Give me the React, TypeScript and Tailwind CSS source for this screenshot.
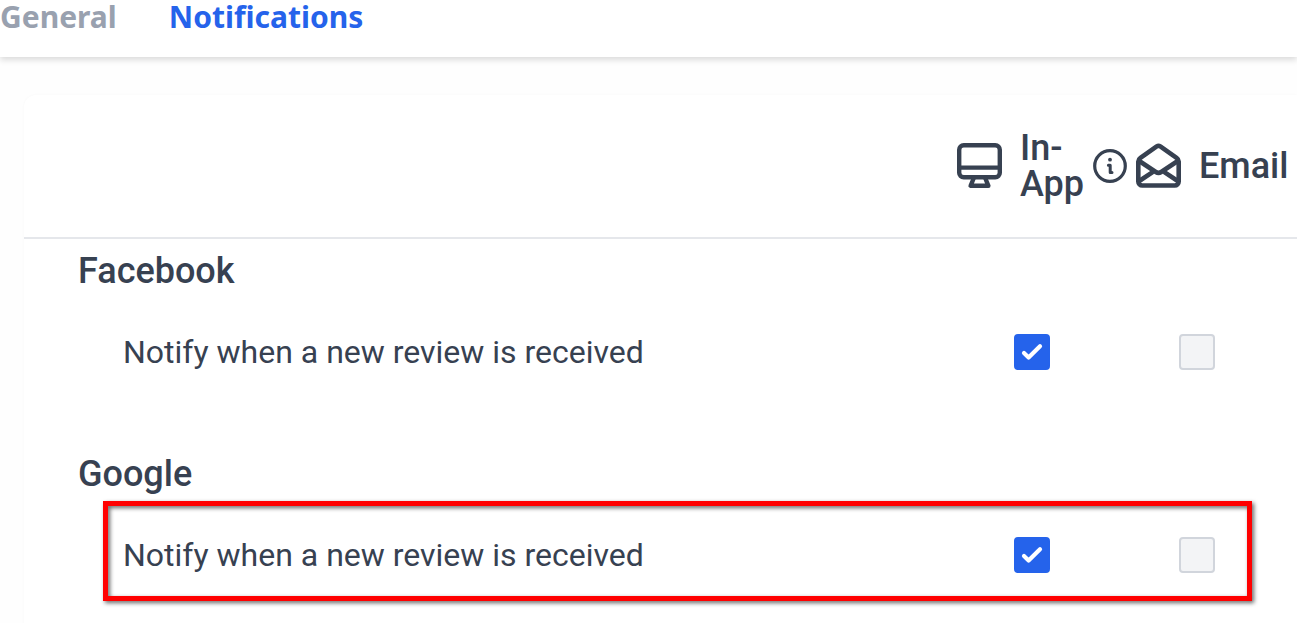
import React, { useState } from 'react';

interface NotificationRow {
    id: string;
    source: string;
    label: string;
    highlighted?: boolean;
}

const TABS = ['General', 'Notifications'];

const ROWS: NotificationRow[] = [
    { id: 'facebook', source: 'Facebook', label: 'Notify when a new review is received' },
    { id: 'google', source: 'Google', label: 'Notify when a new review is received', highlighted: true },
];

function MonitorIcon() {
    return (
        <svg viewBox="0 0 45 46" className="h-[46px] w-[45px] shrink-0" fill="none" stroke="currentColor" strokeWidth="4.4" strokeLinejoin="round" strokeLinecap="round" aria-hidden="true">
            <rect x="2.2" y="2.2" width="40.6" height="32" rx="4.5" />
            <path d="M2.5 24.6h40" />
            <path d="M16.8 35 L13.6 42.8 H31.4 L28.2 35" />
        </svg>
    );
}

function InfoIcon() {
    return (
        <svg viewBox="0 0 34 34" className="size-[34px] shrink-0" fill="none" stroke="currentColor" strokeWidth="3" strokeLinecap="round" strokeLinejoin="round" aria-hidden="true">
            <circle cx="17" cy="17" r="15.3" strokeWidth="3.2" />
            <circle cx="17" cy="10.7" r="1.9" fill="currentColor" stroke="none" />
            <path d="M15.4 16.2h1.8v7.2h1.8" />
        </svg>
    );
}

function MailOpenIcon() {
    return (
        <svg viewBox="0 0 45 46" className="h-[46px] w-[45px] shrink-0" fill="none" stroke="currentColor" strokeWidth="4.6" strokeLinejoin="round" aria-hidden="true">
            <path d="M2.3 18.5v20a4 4 0 0 0 4 4h32.4a4 4 0 0 0 4-4v-20a4 4 0 0 0-1.8-3.3L24.3 3.4a3.4 3.4 0 0 0-3.6 0L4.1 15.2a4 4 0 0 0-1.8 3.3Z" />
            <path d="M2.5 17.5 19.8 29a5 5 0 0 0 5.4 0L42.5 17.5" />
            <path d="M2.5 38.5 17 28.8M42.5 38.5 28 28.8" />
        </svg>
    );
}

function Checkbox({ id, label, defaultChecked = false }: { id: string; label: string; defaultChecked?: boolean }) {
    return (
        <label htmlFor={id} className="grid size-9 cursor-pointer">
            <input
                id={id}
                type="checkbox"
                aria-label={label}
                defaultChecked={defaultChecked}
                className="peer col-start-1 row-start-1 size-9 appearance-none rounded border-2 border-gray-300 bg-gray-100 checked:border-[#2563eb] checked:bg-[#2563eb]"
            />
            <svg viewBox="0 0 36 36" className="pointer-events-none invisible col-start-1 row-start-1 size-9 peer-checked:visible" fill="none" stroke="#fff" strokeWidth="4.2" strokeLinecap="round" strokeLinejoin="round" aria-hidden="true">
                <path d="M10 19l4.6 4.5L26 12.2" />
            </svg>
        </label>
    );
}

function App() {
    const [tab, setTab] = useState('Notifications');

    return (
        <div className="min-h-screen overflow-x-hidden bg-[#fefefe] font-['Roboto',sans-serif] text-[#374151]">
            <nav className="flex h-[57px] items-start gap-[52px] bg-white shadow-[0_3px_6px_rgba(0,0,0,0.14)]">
                {TABS.map(name => (
                    <button
                        key={name}
                        type="button"
                        onClick={() => setTab(name)}
                        className={`font-['Noto_Sans',sans-serif] text-[30px] leading-[34px] font-bold ${tab === name ? 'text-[#2563eb]' : 'text-gray-400'}`}
                    >
                        {name}
                    </button>
                ))}
            </nav>

            <main className="pt-[38px] pl-6">
                <div className="rounded-tl-xl bg-white shadow-[0_0_3px_rgba(0,0,0,0.03)]">
                    <table className="w-full table-fixed text-left">
                        <colgroup>
                            <col />
                            <col className="w-[179px]" />
                            <col className="w-[161px]" />
                        </colgroup>
                        <thead>
                            <tr className="h-[143px] border-b-2 border-gray-200 text-4xl leading-9">
                                <td />
                                <th scope="col" className="font-medium">
                                    <div className="flex items-center">
                                        <MonitorIcon />
                                        <span className="ml-[18px] w-[73px] leading-9">In-App</span>
                                        <InfoIcon />
                                    </div>
                                </th>
                                <th scope="col" className="font-medium">
                                    <div className="flex items-center gap-[18px]">
                                        <MailOpenIcon />
                                        <span className="leading-9">Email</span>
                                    </div>
                                </th>
                            </tr>
                        </thead>
                        {ROWS.map(row => (
                            <tbody key={row.id}>
                                <tr>
                                    <th scope="rowgroup" colSpan={3} className="h-[65px] pl-[54px] text-4xl leading-9 font-medium">
                                        {row.source}
                                    </th>
                                </tr>
                                <tr className="relative align-top">
                                    <th scope="row" className="pt-[31px] pb-[71px] pl-[99px] text-[32px] leading-9 font-normal">
                                        {row.label}
                                        {row.highlighted && (
                                            <div className="pointer-events-none absolute -top-[5px] right-[45px] left-[79px] h-[100px] border-5 border-[#ff0000] drop-shadow-[2px_2px_2px_rgba(0,0,0,0.6)]" />
                                        )}
                                    </th>
                                    <td className="pt-[31px] pl-[57px]">
                                        <Checkbox id={`${row.id}-in-app`} label={`${row.source} In-App`} defaultChecked />
                                    </td>
                                    <td className="pt-[31px] pl-[43px]">
                                        <Checkbox id={`${row.id}-email`} label={`${row.source} Email`} />
                                    </td>
                                </tr>
                            </tbody>
                        ))}
                    </table>
                </div>
            </main>
        </div>
    );
}

export default App;
